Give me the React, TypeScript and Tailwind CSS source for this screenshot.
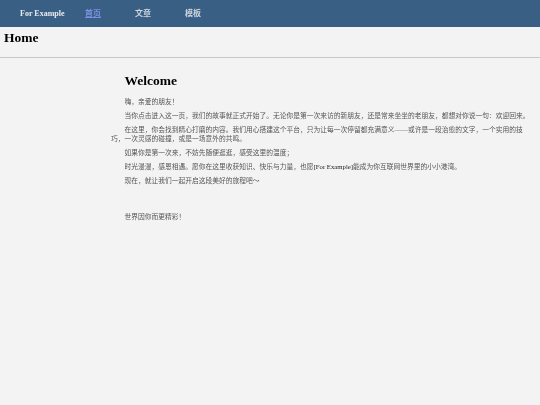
import React from 'react';

const paragraphs: React.ReactNode[] = [
  "嗨，亲爱的朋友！",
  "当你点击进入这一页，我们的故事就正式开始了。无论你是第一次来访的新朋友，还是常来坐坐的老朋友，都想对你说一句：欢迎回来。",
  "在这里，你会找到精心打磨的内容。我们用心搭建这个平台，只为让每一次停留都充满意义——或许是一段治愈的文字，一个实用的技巧，一次灵感的碰撞，或是一场意外的共鸣。",
  "如果你是第一次来，不妨先随便逛逛，感受这里的温度；",
  <>时光漫漫，感恩相遇。愿你在这里收获知识、快乐与力量，也愿<span className="text-[#222]">[For Example]</span>能成为你互联网世界里的小小港湾。</>,
  "现在，就让我们一起开启这段美好的旅程吧～",
];

const App: React.FC = () => {
  return (
    <div className="min-h-[405px] bg-[#f3f3f3] font-['Liberation_Serif','Noto_Sans_CJK_SC',serif] blur-[0.3px]">
      <nav className="h-[27px] bg-[#3a5f85] flex items-center pl-[20px] text-[8px] font-bold text-[#cdd5de]">
        <span className="w-[65px] text-[#e8ecf0]">For Example</span>
        <a className="w-[50px] text-[#7b8fe0] underline">首页</a>
        <a className="w-[50px]">文章</a>
        <a>模板</a>
      </nav>
      <header className="h-[31px] border-b border-[#c8c8c8] pl-[4px] pt-[2px]">
        <h1 className="text-[13.5px] leading-[18px] font-bold text-black">Home</h1>
      </header>
      <main className="pl-[111px] pr-[6px] pt-[14px] text-[6.75px] leading-[9px] text-[#555] indent-[13.5px]">
        <h2 className="text-[13.5px] leading-[17px] font-bold text-black mb-[8px]">Welcome</h2>
        <div className="flex flex-col gap-[5px]">
          {paragraphs.map((p, i) => (
            <p key={i}>{p}</p>
          ))}
        </div>
        <p className="mt-[27px]">世界因你而更精彩！</p>
      </main>
    </div>
  );
};

export default App;
